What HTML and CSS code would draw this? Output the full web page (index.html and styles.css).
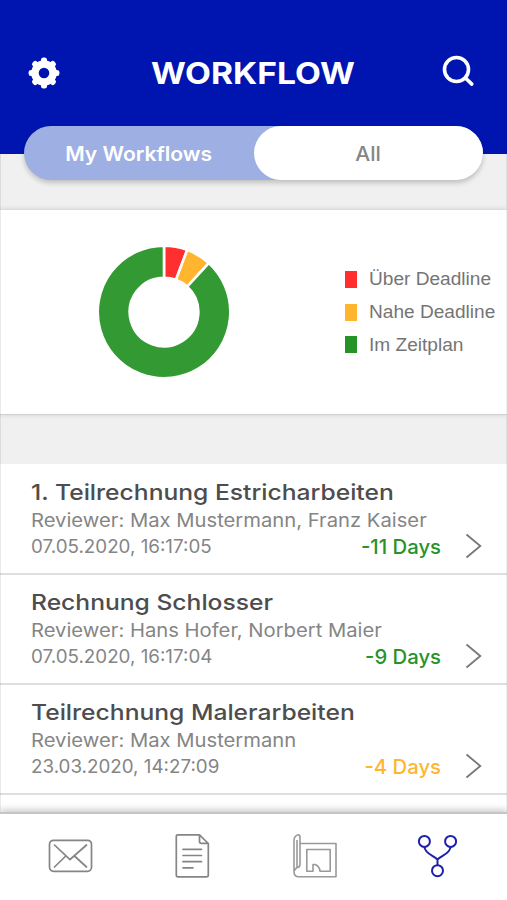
FILE: index.html
```html
<!DOCTYPE html>
<html lang="de">
<head>
<meta charset="utf-8">
<title>Workflow</title>
<link rel="stylesheet" href="styles.css">
</head>
<body>
<div class="app">
  <header class="header">
    <div class="bar">
      <svg class="gear" viewBox="-16 -16 32 32"><g fill="#fff"><path fill-rule="evenodd" d="M0-12.8A12.8 12.8 0 1 1 0 12.8A12.8 12.8 0 1 1 0-12.8ZM0-5.3A5.3 5.3 0 1 0 0 5.3A5.3 5.3 0 1 0 0-5.3Z"/><g id="teeth"><rect x="-3" y="-15.4" width="6" height="6" rx="2.500"/><rect x="-3" y="9.4" width="6" height="6" rx="2.500"/><rect x="-15.4" y="-3" width="6" height="6" rx="2.500"/><rect x="9.4" y="-3" width="6" height="6" rx="2.500"/></g><use href="#teeth" transform="rotate(45)"/></g></svg>
      <h1 class="title">WORKFLOW</h1>
      <svg class="search" viewBox="0 0 34 34"><g fill="none" stroke="#fff" stroke-width="3.6" stroke-linecap="round"><circle cx="15.5" cy="15.5" r="12"/><path d="M24.2 23.8l6.6 6.3"/></g></svg>
    </div>
    <div class="switch">
      <div class="tab mine"><span>My Workflows</span></div>
      <div class="tab all"><span>All</span></div>
    </div>
  </header>
  <section class="chart">
    <svg class="donut" viewBox="-67 -67 134 134"><g stroke="#fff" stroke-width="2.6"><path fill="#ff2f2f" d="M0-66.3A66.3 66.3 0 0 1 23.2-62.1L12-32.2A34.3 34.3 0 0 0 0-34.3Z"/><path fill="#ffb52e" d="M23.2-62.1A66.3 66.3 0 0 1 44.8-48.9L23.2-25.3A34.3 34.3 0 0 0 12-32.2Z"/><path fill="#339933" d="M44.8-48.9A66.3 66.3 0 1 1 0-66.3V-34.3A34.3 34.3 0 1 0 23.2-25.3Z"/></g></svg>
    <ul class="legend">
      <li><i class="key red"></i><span>Über Deadline</span></li>
      <li><i class="key amber"></i><span>Nahe Deadline</span></li>
      <li><i class="key green"></i><span>Im Zeitplan</span></li>
    </ul>
  </section>
  <main class="list">
    <article class="row">
      <h2>1. Teilrechnung Estricharbeiten</h2>
      <p class="reviewer">Reviewer: Max Mustermann, Franz Kaiser</p>
      <div class="meta"><time>07.05.2020, 16:17:05</time><b class="days ok">-11 Days</b><svg class="chev" viewBox="0 0 17 26"><path d="M1.5 1.5L15.3 13 1.5 24.5"/></svg></div>
    </article>
    <article class="row">
      <h2>Rechnung Schlosser</h2>
      <p class="reviewer">Reviewer: Hans Hofer, Norbert Maier</p>
      <div class="meta"><time>07.05.2020, 16:17:04</time><b class="days ok">-9 Days</b><svg class="chev" viewBox="0 0 17 26"><path d="M1.5 1.5L15.3 13 1.5 24.5"/></svg></div>
    </article>
    <article class="row">
      <h2>Teilrechnung Malerarbeiten</h2>
      <p class="reviewer">Reviewer: Max Mustermann</p>
      <div class="meta"><time>23.03.2020, 14:27:09</time><b class="days near">-4 Days</b><svg class="chev" viewBox="0 0 17 26"><path d="M1.5 1.5L15.3 13 1.5 24.5"/></svg></div>
    </article>
  </main>
  <nav class="nav">
    <svg viewBox="0 0 46 46"><g fill="none" stroke="#858585" stroke-width="1.7" stroke-linecap="round"><rect x="2.500" y="7.3" width="42" height="31" rx="4"/><path d="M7.500 12L23 26.500L39.500 12M7.500 34L18.800 23M39.500 34L27.500 23"/></g></svg>
    <svg viewBox="0 0 46 46"><g fill="none" stroke="#858585" stroke-width="1.7" stroke-linecap="round" stroke-linejoin="round"><path d="M9 1.800H30.500L39.300 10.500V42Q39.300 43.800 37.500 43.800H9Q7.300 43.800 7.300 42V3.500Q7.300 1.800 9 1.800ZM30.500 1.800V8.500Q30.500 10.300 32.500 10.300H39.300M14 16.300H32.500M14 22.500H32.500M14 28.700H32.500M14 34.800H24"/></g></svg>
    <svg viewBox="0 0 46 46"><g fill="none" stroke="#999" stroke-width="1.6" stroke-linejoin="round"><path d="M8 10.500H44V43.800H6Q2 43.300 2 38.500V7Q2.500 2.500 6.300 1.800Q8 2 8 4.500V32Q7.500 34.500 4.500 34.800L2 38"/><path d="M5 7V34M20 38.200H14.800V16.500H38.200V38.200H28Q27.500 33 23 31.500H21V38.200Z"/></g></svg>
    <svg viewBox="0 0 46 46"><g fill="none" stroke="#1c20aa" stroke-width="2"><circle cx="10.400" cy="8.400" r="5.500"/><circle cx="36.600" cy="8.400" r="5.500"/><circle cx="23.500" cy="37.700" r="5.500"/><path d="M10.400 14C11 21 20 22.500 23.500 26.500V32M36.600 14C36 21 27 22.500 23.500 26.500"/></g></svg>
  </nav>
</div>
</body>
</html>
```
FILE: styles.css
```css
* { box-sizing: border-box; margin: 0; padding: 0; }
body { font-family: Inter, "Liberation Sans", sans-serif; background: #f0f0f0; }
.app { width: 507px; height: 900px; overflow: hidden; display: flex; flex-direction: column; background: #f0f0f0; position: relative; }
.app::after { content: ""; position: absolute; inset: 154px 0 88px; border-left: 1px solid rgba(0,0,0,.08); border-right: 1px solid rgba(0,0,0,.06); }
svg { display: block; flex: none; }
.header { height: 154px; background: #0015b0; flex: none; margin-bottom: 55px; }
.bar { height: 126px; padding: 20px 32px 0 28px; display: flex; align-items: center; justify-content: space-between; }
.gear { width: 32px; height: 32px; }
.search { width: 34px; height: 34px; margin-top: -5px; }
.title { color: #fff; font-size: 30px; font-weight: 650; line-height: 36px; white-space: nowrap; transform: translateX(3px) scaleX(1.12); }
.switch { height: 54px; margin: 0 24px; display: flex; border-radius: 27px; background: #9dafe3; box-shadow: 0 3px 5px rgba(0,0,0,.2); }
.tab { font-size: 20px; display: flex; align-items: center; justify-content: center; white-space: nowrap; }
.tab span { transform: translateY(.5px) scaleX(1.055); }
.mine { width: 230px; color: #fff; font-weight: 600; }
.all { flex: 1; background: #fff; border-radius: 27px; color: #858585; font-weight: 450; }
.chart { height: 206px; flex: none; margin-bottom: 49px; background: #fff; border-top: 1px solid #ddd; border-bottom: 1px solid #d0d0d0; box-shadow: 0 0 5px rgba(0,0,0,.12); display: flex; align-items: center; padding-left: 97px; }
.donut { width: 134px; height: 134px; }
.legend { list-style: none; margin-left: 114px; }
.legend li { height: 32.700px; display: flex; align-items: center; gap: 12px; font: 19.100px "Liberation Sans", Arial, sans-serif; color: #757575; white-space: nowrap; }
.key { width: 12px; height: 17px; }
.red { background: #ff2f2f; }
.amber { background: #ffb52e; }
.green { background: #259328; }
.list { height: 348px; flex: none; background: #fff; padding-top: 1px; }
.row { height: 110px; padding: 13px 25px 0 31px; border-bottom: 2px solid #dedede; white-space: nowrap; }
h2, .reviewer, time { width: max-content; transform-origin: left; }
h2 { font-size: 22px; font-weight: 450; line-height: 28px; color: #4d4d4d; transform: scaleX(1.12); }
.reviewer { font-size: 18.500px; line-height: 28px; color: #858585; transform: scaleX(1.093); }
.meta { height: 24px; display: flex; align-items: center; font-size: 18.500px; color: #858585; }
time { transform: scaleX(1.015); }
.days { margin-left: auto; font-size: 20.300px; font-weight: 450; }
.ok { color: #259328; }
.near { color: #ffb52e; }
.chev { width: 17px; height: 26px; margin-left: 24px; }
.chev path { fill: none; stroke: #777; stroke-width: 1.8; }
.nav { height: 88px; flex: none; background: #fff; border-top: 2px solid #c5c5c5; box-shadow: 0 -3px 6px rgba(0,0,0,.18); display: flex; justify-content: space-between; padding: 19px 47px 0; }
.nav svg { width: 46px; height: 46px; }
```
